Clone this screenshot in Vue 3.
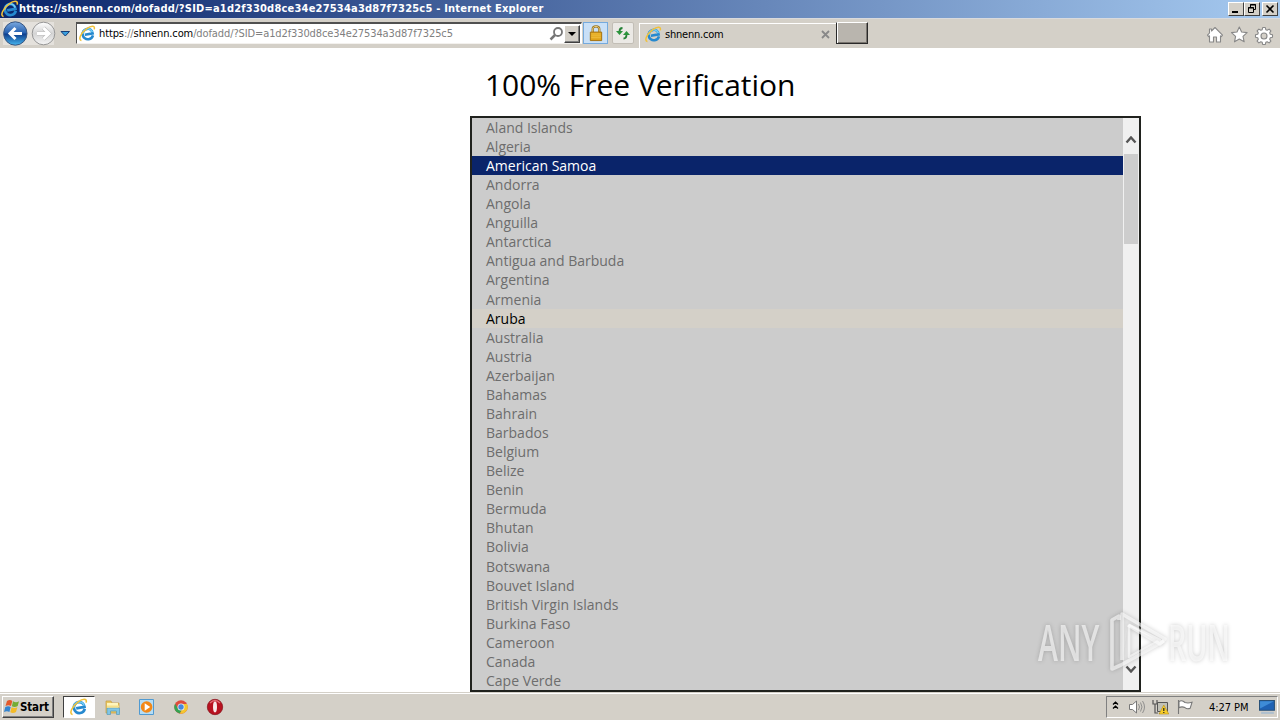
<template>
  <div class="desktop">
    <svg class="defs" aria-hidden="true">
      <symbol id="ie" viewBox="0 0 18 18">
        <g transform="rotate(-10 9 9)">
          <path d="M14.4 11.9C13.4 14 11.5 15.1 9.2 15.1C6.1 15.1 3.8 12.7 3.8 9.6S6.1 4.1 9.2 4.1S14.4 6.4 14.4 9.8H6" fill="none" stroke="#2689cf" stroke-width="2.7" />
          <path d="M4 8.6C4.7 5.7 6.8 4.1 9.2 4.1S13.7 5.4 14.4 8.5" fill="none" stroke="#6fccf5" stroke-width="1.6" />
        </g>
        <path d="M2.6 16.5C-1.4 15.7 2.2 8.2 8.2 3.8C12.4.7 17.4-.2 16.1 4.6" fill="none" stroke="#f0c13a" stroke-width="1.6" />
      </symbol>
    </svg>

    <header class="titlebar">
      <svg class="ie-title"><use href="#ie" /></svg>
      <span class="title-text">{{ url }} - Internet Explorer</span>
      <div class="window-buttons">
        <button class="win-btn"><svg viewBox="0 0 14 12"><path d="M3 9h6" stroke="#000" stroke-width="2" /></svg></button>
        <button class="win-btn"><svg viewBox="0 0 14 12"><path d="M5.5 4V1.5h5v5H9M5 2h6M3.5 4.5h5v5h-5zM3 5h6" fill="none" stroke="#000" /></svg></button>
        <button class="win-btn close"><svg viewBox="0 0 14 12"><path d="m3.5 2.5 7 7m0-7-7 7" stroke="#000" stroke-width="1.6" /></svg></button>
      </div>
    </header>

    <nav class="toolbar">
      <svg class="nav-icons" viewBox="0 0 75 30">
        <defs>
          <linearGradient id="back" x2="0" y2="1">
            <stop stop-color="#7ba9df" />
            <stop offset=".48" stop-color="#245faf" />
            <stop offset=".52" stop-color="#0d3d8c" />
            <stop offset="1" stop-color="#46b6f0" />
          </linearGradient>
          <linearGradient id="forward" x2="0" y2="1">
            <stop stop-color="#fff" />
            <stop offset=".5" stop-color="#d4d4d4" />
            <stop offset="1" stop-color="#f5f5f5" />
          </linearGradient>
        </defs>
        <path d="M3 4H54V27H3z" fill="#eeece9" opacity=".6" />
        <circle cx="15.3" cy="15.5" r="11.7" fill="url(#back)" stroke="#385681" />
        <path d="M22 15.5H10m5.5-5.5L10 15.5l5.5 5.5" fill="none" stroke="#fff" stroke-width="3" />
        <circle cx="43.5" cy="15.5" r="11.3" fill="url(#forward)" stroke="#969696" />
        <path d="M37 15.5h12M43.5 10l5.5 5.5-5.5 5.5" fill="none" stroke="#bbb" stroke-width="4" />
        <path d="M37 15.5h12M43.5 10l5.5 5.5-5.5 5.5" fill="none" stroke="#fff" stroke-width="3" />
        <path d="M61 13.5h8.5L65.3 18z" fill="#39a0df" stroke="#163e78" />
      </svg>

      <div class="address">
        <svg class="ie-small"><use href="#ie" /></svg>
        <span class="url"><b>https</b>://<b>shnenn.com</b>/dofadd/?SID=a1d2f330d8ce34e27534a3d87f7325c5</span>
        <svg class="search" viewBox="0 0 16 16"><circle cx="10" cy="6" r="4" fill="#fff" stroke="#777" stroke-width="1.8" /><path d="m7 9-4.5 4.5" stroke="#777" stroke-width="2.5" /></svg>
        <button class="dropdown"><i></i></button>
      </div>

      <div class="tool lock">
        <svg viewBox="0 0 16 18">
          <path d="M4.5 8V4.5C4.5 2.4 5.9 1.5 8 1.5s3.5.9 3.5 3V8" fill="none" stroke="#94701f" stroke-width="2.4" />
          <path d="M4.5 8V4.5C4.5 2.4 5.9 1.5 8 1.5s3.5.9 3.5 3V8" fill="none" stroke="#f0d280" stroke-width="1" />
          <path d="M2 7.5h12v9H2z" fill="#dfa31a" stroke="#a3700c" />
          <path d="M3 9.5h10M3 11.5h10M3 13.5h10" stroke="#f8cb4f" stroke-width=".8" />
        </svg>
      </div>
      <div class="tool refresh">
        <svg viewBox="0 0 16 16"><path d="M7.5 2.5Q4.5 2.5 4.5 6M8.5 13q3 0 3-4" fill="none" stroke="#258136" stroke-width="1.8" /><path d="M1 5.5h7L4.5 9.5zM8 9.5h7l-3.5-4z" fill="#2c943c" /></svg>
      </div>

      <div class="tab">
        <svg class="ie-small"><use href="#ie" /></svg>
        <span>shnenn.com</span>
        <svg class="tab-close" viewBox="0 0 9 9"><path d="m1 1 7 7m0-7L1 8" stroke="#888" stroke-width="1.8" /></svg>
      </div>
      <button class="new-tab"></button>

      <svg class="commands" viewBox="0 0 70 20">
        <g fill="#fff" stroke="#888" stroke-width="1.1" stroke-linejoin="round">
          <path d="m9 2.5 7.5 7.7-1.2 1.4-.8-.8V17h-4v-5h-3v5h-4v-6.2l-.8.8-1.2-1.4L3.5 8V4h2v2z" />
          <path d="m33.3 2 2.3 5 5.5.6-4.1 3.7 1.2 5.5-4.9-2.8-4.8 2.8 1.1-5.5-4.1-3.7 5.5-.6z" />
          <path d="m56.7 2.5 2.6 0 .5 2.2 1.4.6 1.9-1.2 1.8 1.8-1.2 1.9.6 1.4 2.2.5v2.6l-2.2.5-.6 1.4 1.2 1.9-1.8 1.8-1.9-1.2-1.4.6-.5 2.2h-2.6l-.5-2.2-1.4-.6-1.9 1.2-1.8-1.8 1.2-1.9-.6-1.4-2.2-.5V9.7l2.2-.5.6-1.4-1.2-1.9 1.8-1.8 1.9 1.2 1.4-.6z" />
          <circle cx="58" cy="11" r="3" fill="#d4d0c8" />
        </g>
      </svg>
    </nav>

    <main class="page">
      <h1>100% Free Verification</h1>
      <div class="select">
        <ul class="options">
          <li
            v-for="country in countries"
            :key="country"
            :class="{ selected: country === selected, hovered: country === hovered }"
          >{{ country }}</li>
        </ul>
        <div class="scrollbar">
          <svg viewBox="0 0 12 8"><path d="m1.5 6.5 4.5-5 4.5 5" /></svg>
          <div class="thumb"></div>
          <svg class="down" viewBox="0 0 12 8"><path d="m1.5 1.5 4.5 5 4.5-5" /></svg>
        </div>
      </div>
    </main>

    <footer class="taskbar">
      <button class="start">
        <svg viewBox="0 0 18 16">
          <path d="M4 2q3-2 5.3 0L8 7Q5.5 5.3 2.5 7z" fill="#e4592a" />
          <path d="M10 2.3q3 1.8 6 0L14.7 7q-3 1.8-5.8.3z" fill="#75ac35" />
          <path d="M2.3 8q3-1.6 5.4 0l-1.3 5Q4 11.3 1 13z" fill="#3484cf" />
          <path d="M8.6 8.3q3 1.6 5.8 0L13 13q-3 1.7-5.7.2z" fill="#f4bb28" />
        </svg>
        <span>Start</span>
      </button>
      <div class="launch active"><svg class="ie-task"><use href="#ie" /></svg></div>
      <div class="launch">
        <svg viewBox="0 0 18 18"><path d="M2 3h5l1 2h7v10H2z" fill="#e8c662" stroke="#c69c3e" stroke-width=".7" /><path d="M3 5h11v5H3z" fill="#fff5bc" /><path d="M3 10h12.5v6.5h-3V13h-6v3.5H3z" fill="#80c5e5" stroke="#579bb9" stroke-width=".7" /><path d="M3 8.5h12" stroke="#f5df8b" stroke-width="2" /></svg>
      </div>
      <div class="launch">
        <svg viewBox="0 0 18 18"><path d="M1.5 1.5h14v15h-14z" fill="#b5ddf5" stroke="#509ad1" /><circle cx="8.6" cy="9" r="5.8" fill="#f28817" /><path d="m6.7 5.3 5.5 3.7-5.5 3.7z" fill="#fff" /></svg>
      </div>
      <div class="launch">
        <svg viewBox="0 0 18 18"><circle cx="9" cy="9" r="6.7" fill="#de4b3c" /><path d="M3.1 5.8 6.2 11l3.6.5-2 4.1A6.7 6.7 0 0 1 3.1 5.8" fill="#34a353" /><path d="M9 6h6a6.7 6.7 0 0 1-7.2 9.6l3.7-6.2z" fill="#f4c72f" /><circle cx="9" cy="9" r="3.5" fill="#eee" /><circle cx="9" cy="9" r="2.7" fill="#4587df" /></svg>
      </div>
      <div class="launch">
        <svg viewBox="0 0 18 18"><circle cx="9" cy="9" r="7.7" fill="#b81220" stroke="#831018" stroke-width=".7" /><path d="M4 5q5-5 10 0" fill="none" stroke="#e26d75" stroke-width="1.4" /><ellipse cx="9" cy="9" rx="2" ry="5.4" fill="#f9e9e9" /></svg>
      </div>

      <div class="tray">
        <svg class="chevrons" viewBox="0 0 7 9"><path d="m1 3.5 2.5-2.3L6 3.5M1 7.5l2.5-2.3L6 7.5" fill="none" stroke="#000" stroke-width="1.3" /></svg>
        <svg class="volume" viewBox="0 0 18 16"><path d="M1.5 5.5h3L8.5 2v12l-4-3.5h-3z" fill="#fff" stroke="#777" /><path d="M10.5 5q2 3 0 6M12.5 3.5q3 4.5 0 9M14.5 2q4 6 0 12" fill="none" stroke="#888" stroke-width=".9" /></svg>
        <svg class="network" viewBox="0 0 18 16"><path d="M5.5 3.5h10v9h-10z" fill="#c1c1b7" stroke="#555" /><path d="M1 1v4h4V1M3 5v9h3M7 14.5h6" fill="none" stroke="#555" stroke-width="1.2" /><path d="m11.8 6 5 9H7z" fill="#f7cd29" stroke="#b98e14" stroke-width=".6" /><path d="M11.8 9v3m0 1v1" stroke="#222" stroke-width="1.2" /></svg>
        <svg class="flag" viewBox="0 0 18 16"><path d="M2.5 1v14M3 2.5q3-2 6 1 3 1 7-.2l-1.8 5.9q-3 1.2-5.3-.6Q6 7 3 8.7z" fill="#fff" stroke="#777" stroke-width="1.1" /></svg>
        <time>4:27 PM</time>
        <svg class="desktop-icon" viewBox="0 0 16 13"><path d="M.5.5h14v9H.5z" fill="#1f62b4" stroke="#295178" /><path d="M1 1h13L1 8z" fill="#3e8cd7" /><path d="M2 12h12" stroke="#aebfce" stroke-width="2" /></svg>
      </div>
    </footer>

    <div class="watermark">
      <span class="any">ANY</span>
      <svg viewBox="0 0 60 66">
        <g fill="none" stroke="#fff" stroke-opacity=".6" stroke-width="3.6" stroke-linejoin="round">
          <path d="M11 12V8L4 12v49l9-4 43-24" />
          <path d="M14 52V6l43 25-5 5-32-19" fill="#fff" fill-opacity=".15" />
          <path d="M21 17v32l31-17-31-15" stroke-width="2.5" />
        </g>
      </svg>
      <span class="run">RUN</span>
    </div>
  </div>
</template>

<script setup>
import { ref } from 'vue';

const url = 'https://shnenn.com/dofadd/?SID=a1d2f330d8ce34e27534a3d87f7325c5';
const selected = ref('American Samoa');
const hovered = ref('Aruba');

const countries = [
  'Aland Islands', 'Algeria', 'American Samoa', 'Andorra', 'Angola', 'Anguilla',
  'Antarctica', 'Antigua and Barbuda', 'Argentina', 'Armenia', 'Aruba', 'Australia',
  'Austria', 'Azerbaijan', 'Bahamas', 'Bahrain', 'Barbados', 'Belgium', 'Belize',
  'Benin', 'Bermuda', 'Bhutan', 'Bolivia', 'Botswana', 'Bouvet Island',
  'British Virgin Islands', 'Burkina Faso', 'Cameroon', 'Canada', 'Cape Verde'
];
</script>

<style>
body {
  margin: 0;
  overflow: hidden;
}
</style>

<style scoped>
.desktop {
  position: relative;
  display: flex;
  flex-direction: column;
  width: 1280px;
  height: 720px;
  background: #fff;
  font-family: "DejaVu Sans Condensed", "DejaVu Sans", sans-serif;
  font-size: 11px;
  overflow: hidden;
}

.desktop * {
  box-sizing: border-box;
}

svg {
  display: block;
  flex: none;
}

button {
  padding: 0;
  font: inherit;
}

.defs {
  position: absolute;
  width: 0;
  height: 0;
}

.titlebar {
  display: flex;
  height: 18px;
  background: linear-gradient(90deg, #0a246a, #a6caf0);
  color: #fff;
  padding-left: 1px;
}

.ie-title {
  width: 18px;
  height: 18px;
}

.title-text {
  font-weight: bold;
  line-height: 18px;
  white-space: nowrap;
  letter-spacing: 0.207px;
}

.window-buttons {
  display: flex;
  margin: 2px 2px 0 auto;
}

.win-btn {
  width: 16px;
  height: 14px;
  background: #d4d0c8;
  border: 1px solid;
  border-color: #fff #404040 #404040 #fff;
}

.win-btn svg {
  width: 14px;
  height: 12px;
}

.close {
  margin-left: 2px;
}

.toolbar {
  display: flex;
  height: 30px;
  background: #d4d0c8;
  border-top: 1px solid #d9dadd;
}

.nav-icons {
  width: 75px;
  height: 30px;
  margin-top: -1px;
}

.address {
  display: flex;
  align-items: center;
  width: 506px;
  height: 22px;
  margin: 3px 0 0 1px;
  padding: 0 1px 0 2px;
  background: #fff;
  border: 1px solid;
  border-top: 2px solid #444;
  border-color: #505050 #fff #f3f1ee #505050;
}

.ie-small {
  width: 17px;
  height: 17px;
}

.url {
  margin-left: 3px;
  color: #808080;
  white-space: nowrap;
  letter-spacing: -0.11px;
}

.url b {
  color: #000;
  font-weight: normal;
}

.search {
  width: 16px;
  height: 16px;
  margin: 0 0 0 auto;
}

.dropdown {
  display: grid;
  place-items: center;
  width: 16px;
  height: 18px;
  background: #d4d0c8;
  border: 1px solid;
  border-color: #fff #404040 #404040 #fff;
  box-shadow: inset -1px -1px #808080;
}

.dropdown i {
  border: 4px solid transparent;
  border-top-color: #000;
  border-bottom: 0;
}

.tool {
  display: grid;
  place-items: center;
  width: 25px;
  height: 22px;
  margin: 3px 0 0 1px;
  border: 1px solid #75aadd;
  background: #c9e0f7;
}

.tool svg {
  width: 16px;
  height: 17px;
}

.refresh {
  width: 22px;
  margin-left: 4px;
  background: #ebe9e5;
  border-color: #c2beb6;
  border-radius: 2px;
}

.tab {
  display: flex;
  align-items: center;
  width: 197px;
  height: 26px;
  margin: 4px 0 0 5px;
  padding: 0 6px 5px 5px;
  border-top: 1px solid #fff;
  border-left: 1px solid #fff;
}

.tab span {
  margin-left: 3px;
  letter-spacing: -0.22px;
}

.tab-close {
  width: 9px;
  height: 9px;
  margin-left: auto;
}

.new-tab {
  width: 32px;
  height: 22px;
  margin-top: 3px;
  background: #b9b5ae;
  border: 1px solid;
  border-color: #fff #292929 #292929 #292929;
  box-shadow: inset 1px 0 #fff, inset -1px -1px #79756f;
}

.commands {
  width: 70px;
  height: 20px;
  margin: 6px 4px 0 auto;
}

.page {
  flex: 1;
  padding-left: 470px;
  font-family: "Open Sans", sans-serif;
}

h1 {
  height: 68px;
  margin: 0;
  padding: 16px 0 0 15px;
  font-size: 30px;
  font-weight: 400;
  line-height: 42px;
  letter-spacing: -0.04px;
}

.select {
  display: flex;
  width: 671px;
  height: 576px;
  border: 2px solid #20221e;
  background: #ccc;
}

.options {
  flex: 1;
  margin: 0;
  padding: 0;
  list-style: none;
}

.options li {
  height: 19px;
  padding-left: 14px;
  color: #6d6d6d;
  font-size: 14px;
  line-height: 19px;
}

/* row pitch is a bit over 19px, keep the rows on whole pixels */
.options li:nth-child(9),
.options li:nth-child(23) {
  height: 20px;
}

.options .selected {
  color: #fff;
  background: #0a246a;
}

.options .hovered {
  color: #000;
  background: #d4d0c8;
}

.scrollbar {
  display: flex;
  flex-direction: column;
  align-items: center;
  width: 16px;
  padding: 18px 0 17px;
  background: #f0f0f0;
}

.scrollbar svg {
  width: 12px;
  height: 8px;
}

.scrollbar path {
  fill: none;
  stroke: #555;
  stroke-width: 2.4;
}

.thumb {
  width: 14px;
  height: 90px;
  margin-top: 10px;
  background: #cdcdcd;
}

.down {
  margin-top: auto;
}

.taskbar {
  display: flex;
  height: 28px;
  padding: 3px 2px 2px;
  background: #d4d0c8;
  border-top: 1px solid #d4d0c8;
  box-shadow: inset 0 1px #fff;
}

.start {
  display: flex;
  align-items: center;
  width: 52px;
  height: 22px;
  margin-right: 9px;
  background: #d4d0c8;
  border: 1px solid;
  border-color: #fff #404040 #404040 #fff;
  box-shadow: inset -1px -1px #808080;
  font-weight: bold;
}

.start svg {
  width: 18px;
  height: 18px;
}

.start span {
  margin-left: -1px;
  font-size: 11.5px;
  letter-spacing: -0.15px;
}

.launch {
  display: grid;
  place-items: center;
  width: 32px;
  height: 22px;
  margin-right: 2px;
}

.launch svg {
  width: 18px;
  height: 18px;
}

.active {
  background: #fff;
  border: 1px solid;
  border-color: #404040 #fff #fff #404040;
}

.tray {
  display: flex;
  align-items: center;
  width: 172px;
  height: 22px;
  margin-left: auto;
  padding: 0 1px 0 5px;
  border: 1px solid;
  border-color: #808080 #fff #fff #808080;
}

.chevrons {
  width: 7px;
  height: 9px;
  margin: 0 9px 3px 0;
}

.volume,
.network,
.flag {
  width: 18px;
  height: 16px;
  margin-right: 6px;
}

time {
  width: 43px;
  margin-left: 9px;
  white-space: nowrap;
  letter-spacing: -0.06px;
}

.desktop-icon {
  width: 17px;
  height: 14px;
  margin-left: 8px;
}

/* Overlay logo */
.watermark {
  position: absolute;
  left: 1038px;
  top: 607px;
  display: flex;
  align-items: center;
  width: 198px;
  height: 67px;
  color: rgba(255, 255, 255, 0.6);
  font-family: "Open Sans", sans-serif;
  font-size: 51px;
  font-weight: 600;
  filter: drop-shadow(0 0 2px rgba(0, 0, 0, 0.32));
}

.watermark span {
  width: 65px;
  transform: scaleX(0.59);
  transform-origin: left;
}

.watermark .run {
  transform: scaleX(0.56);
}

.watermark svg {
  width: 60px;
  height: 66px;
  margin: 0 0 0 5px;
}
</style>
